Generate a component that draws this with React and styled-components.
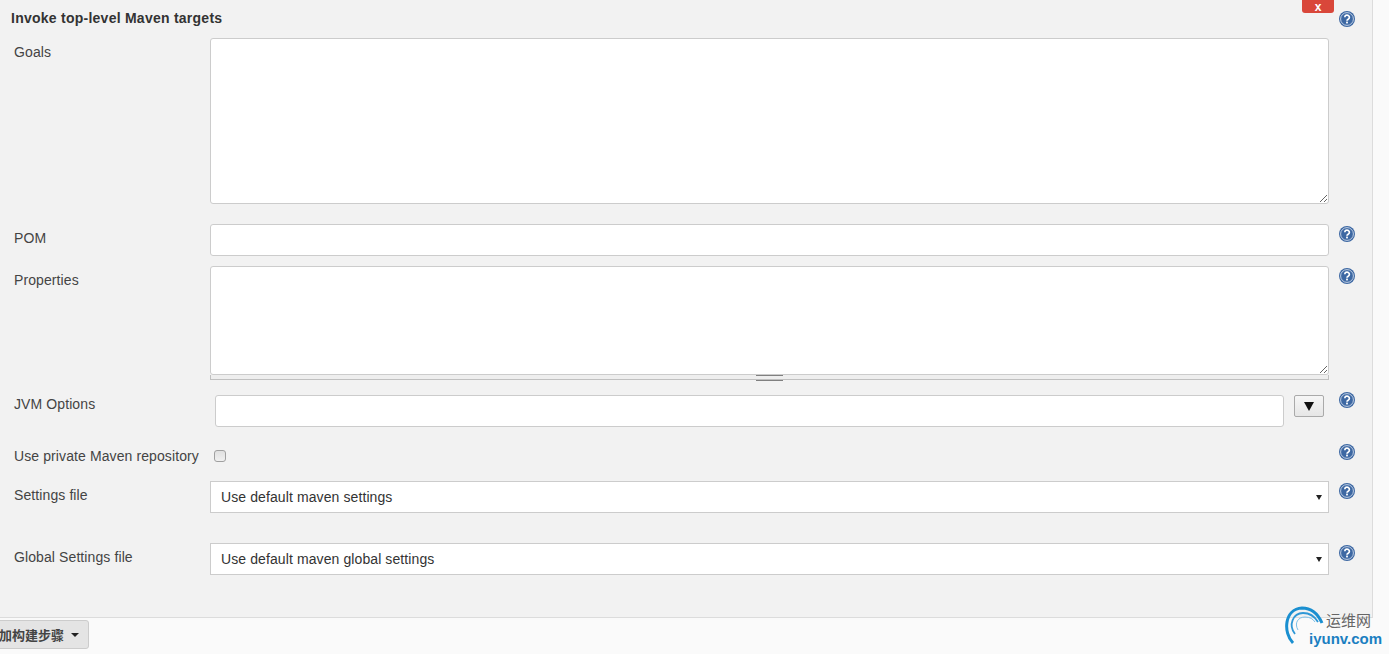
import styled, { createGlobalStyle } from 'styled-components';

const GlobalStyle = createGlobalStyle`
	html, body {
		margin: 0;
		padding: 0;
		background: #fafafa;
	}
	* {
		box-sizing: border-box;
	}
`

const Page = styled.div`
	position: relative;
	display: flex;
	flex-direction: column;
	width: 1389px;
	height: 654px;
	overflow: hidden;
	font-family: 'Liberation Sans', Arial, sans-serif;
	font-size: 14px;
	letter-spacing: 0.1px;
	color: #333;
`

const Panel = styled.div`
	position: relative;
	width: 1373px;
	height: 618px;
	background: #f2f2f2;
	border-right: 1px solid #dcdcdc;
	border-bottom: 1px solid #dcdcdc;
`

const Header = styled.div`
	display: flex;
	align-items: center;
	justify-content: space-between;
	height: 38px;
	padding: 0 17px 2px 11px;
`

const DragHandle = styled.div`
	position: absolute;
	left: 0;
	top: 9px;
	width: 3px;
	height: 18px;
	background-image: radial-gradient(#b5b5b5 40%, transparent 45%);
	background-size: 2px 2px;
`

const Title = styled.b`
	font-size: 14px;
	letter-spacing: 0.25px;
	color: #333;
`

const HeaderHelp = styled.div`
	margin-top: 1px;
`

const DeleteButton = styled.button`
	position: absolute;
	top: -10px;
	left: 1302px;
	width: 32px;
	height: 23px;
	padding: 10px 0 0;
	border: none;
	border-radius: 0 0 3px 3px;
	background: #d9473a;
	color: #fff;
	font: bold 12px/12px 'Liberation Sans', Arial, sans-serif;
`

const Row = styled.div`
	display: grid;
	grid-template-columns: 210px 1119px 1fr;
	margin-top: ${props => props.$gap || 0}px;
	height: ${props => props.$height}px;
`

const Label = styled.label`
	padding: ${props => props.$top || 6}px 0 0 14px;
	white-space: nowrap;
	color: #444;
`

const HelpCell = styled.div`
	margin-top: ${props => props.$top ?? 2}px;
	padding-left: 10px;
`

const TextArea = styled.textarea`
	display: block;
	width: 100%;
	height: ${props => props.$height}px;
	margin: 0;
	background: #fff;
	border: 1px solid #ccc;
	border-radius: 3px;
	outline: none;
`

const TextInput = styled.input`
	display: block;
	width: 100%;
	height: 100%;
	background: #fff;
	border: 1px solid #ccc;
	border-radius: 3px;
	outline: none;
`

const Grip = styled.div`
	display: flex;
	justify-content: center;
	height: 5px;
	background: #eee;
	border: 1px solid #c0c0c0;
	border-top: none;

	&::before {
		content: '';
		width: 27px;
		height: 4px;
		border-top: 1px solid #808080;
		border-bottom: 1px solid #808080;
	}
`

const JvmField = styled.div`
	display: flex;
	gap: 10px;
	padding: 0 5px;
`

const ExpandButton = styled.button`
	flex: none;
	display: flex;
	align-items: center;
	justify-content: center;
	width: 30px;
	height: 22px;
	padding: 0;
	background: linear-gradient(#f6f6f6, #e6e6e6);
	border: 1px solid #aaa;
	border-radius: 2px;
`

const Check = styled.span`
	display: block;
	width: 12px;
	height: 12px;
	margin: 3px 0 0 4px;
	background: linear-gradient(#e0e0e0, #f0f0f0);
	border: 1px solid #a0a0a0;
	border-radius: 3px;
`

const SelectBox = styled.div`
	display: flex;
	align-items: center;
	justify-content: space-between;
	height: 100%;
	padding: 0 6px 0 10px;
	background: #fff;
	border: 1px solid #ccc;
	color: #333;

	&::after {
		content: '';
		border-top: 5px solid #222;
		border-left: 3.5px solid transparent;
		border-right: 3.5px solid transparent;
	}
`

const BottomBar = styled.div`
	display: flex;
	align-items: flex-start;
	flex: 1;
	padding-top: 2px;
	background: #fafafa;
`

const AddButton = styled.button`
	flex: none;
	display: flex;
	align-items: center;
	justify-content: flex-end;
	gap: 7px;
	height: 29px;
	width: 108px;
	margin-left: -19px;
	padding: 0 9px 0 0;
	background: #e4e4e4;
	border: 1px solid #ccc;
	border-radius: 3px;
	color: #444;
	font: bold 13px 'Liberation Sans', 'Noto Sans CJK SC', sans-serif;

	&::after {
		content: '';
		border-top: 4px solid #222;
		border-left: 4px solid transparent;
		border-right: 4px solid transparent;
	}
`

const Watermark = styled.div`
	position: absolute;
	left: 1285px;
	top: 606px;
	width: 104px;
	height: 48px;
`

const WatermarkCn = styled.span`
	position: absolute;
	left: 41px;
	top: 5px;
	font: 15px/18px 'Noto Sans CJK SC', sans-serif;
	letter-spacing: 0;
	color: #666;
`

const WatermarkEn = styled.span`
	position: absolute;
	left: 24px;
	top: 24px;
	font: bold 15px/18px 'Liberation Sans', Arial, sans-serif;
	letter-spacing: 0;
	color: #1a7fc1;
`

const HelpIcon = () => (
	<svg width="16" height="16" viewBox="0 0 16 16" style={{ display: 'block' }}>
		<circle cx="8" cy="8" r="8" fill="#3d68a3" />
		<circle cx="8" cy="8" r="6.4" fill="none" stroke="#dfe7f2" strokeWidth="0.8" />
		<path d="M5.8 6.2a2.3 2.2 0 1 1 3.4 2c-.8.5-1.2.8-1.2 1.6" fill="none" stroke="#fff" strokeWidth="1.7" />
		<rect x="7.1" y="10.6" width="1.8" height="1.8" fill="#fff" />
	</svg>
)

const LogoArcs = () => (
	<svg width="40" height="48" viewBox="0 0 40 48" style={{ display: 'block' }}>
		<path d="M8 37C-2 27-1 3 17 2c9 0 16 6 20 15" fill="none" stroke="#1a8fd0" strokeWidth="3" />
		<path d="M10 28C3 19 8 7 18 7c7 0 12 4 15 9" fill="none" stroke="#2f98d6" strokeWidth="1.8" />
		<path d="M13 24C9 17 13 11 20 11c5 0 8 2 10 5" fill="none" stroke="#7cc0e8" strokeWidth="1" />
	</svg>
)

const App = () => {
	return (
		<Page>
			<GlobalStyle />
			<Panel>
				<DragHandle />
				<Header>
					<Title>Invoke top-level Maven targets</Title>
					<HeaderHelp><HelpIcon /></HeaderHelp>
				</Header>
				<DeleteButton>x</DeleteButton>
				<Row $height={166}>
					<Label>Goals</Label>
					<TextArea $height={166} />
				</Row>
				<Row $gap={20} $height={32}>
					<Label $top={6}>POM</Label>
					<TextInput />
					<HelpCell><HelpIcon /></HelpCell>
				</Row>
				<Row $gap={10} $height={114}>
					<Label>Properties</Label>
					<div>
						<TextArea $height={109} />
						<Grip />
					</div>
					<HelpCell><HelpIcon /></HelpCell>
				</Row>
				<Row $gap={15} $height={32}>
					<Label $top={1}>JVM Options</Label>
					<JvmField>
						<TextInput />
						<ExpandButton>
							<svg width="10" height="9" viewBox="0 0 10 9"><path d="M0 0h10L5 9z" fill="#111" /></svg>
						</ExpandButton>
					</JvmField>
					<HelpCell $top={-3}><HelpIcon /></HelpCell>
				</Row>
				<Row $gap={20} $height={20}>
					<Label $top={1}>Use private Maven repository</Label>
					<Check />
					<HelpCell $top={-3}><HelpIcon /></HelpCell>
				</Row>
				<Row $gap={14} $height={32}>
					<Label $top={6}>Settings file</Label>
					<SelectBox>Use default maven settings</SelectBox>
					<HelpCell><HelpIcon /></HelpCell>
				</Row>
				<Row $gap={30} $height={32}>
					<Label $top={6}>Global Settings file</Label>
					<SelectBox>Use default maven global settings</SelectBox>
					<HelpCell><HelpIcon /></HelpCell>
				</Row>
			</Panel>
			<BottomBar>
				<AddButton>增加构建步骤</AddButton>
			</BottomBar>
			<Watermark>
				<LogoArcs />
				<WatermarkCn>运维网</WatermarkCn>
				<WatermarkEn>iyunv.com</WatermarkEn>
			</Watermark>
		</Page>
	);
}

export default App;
